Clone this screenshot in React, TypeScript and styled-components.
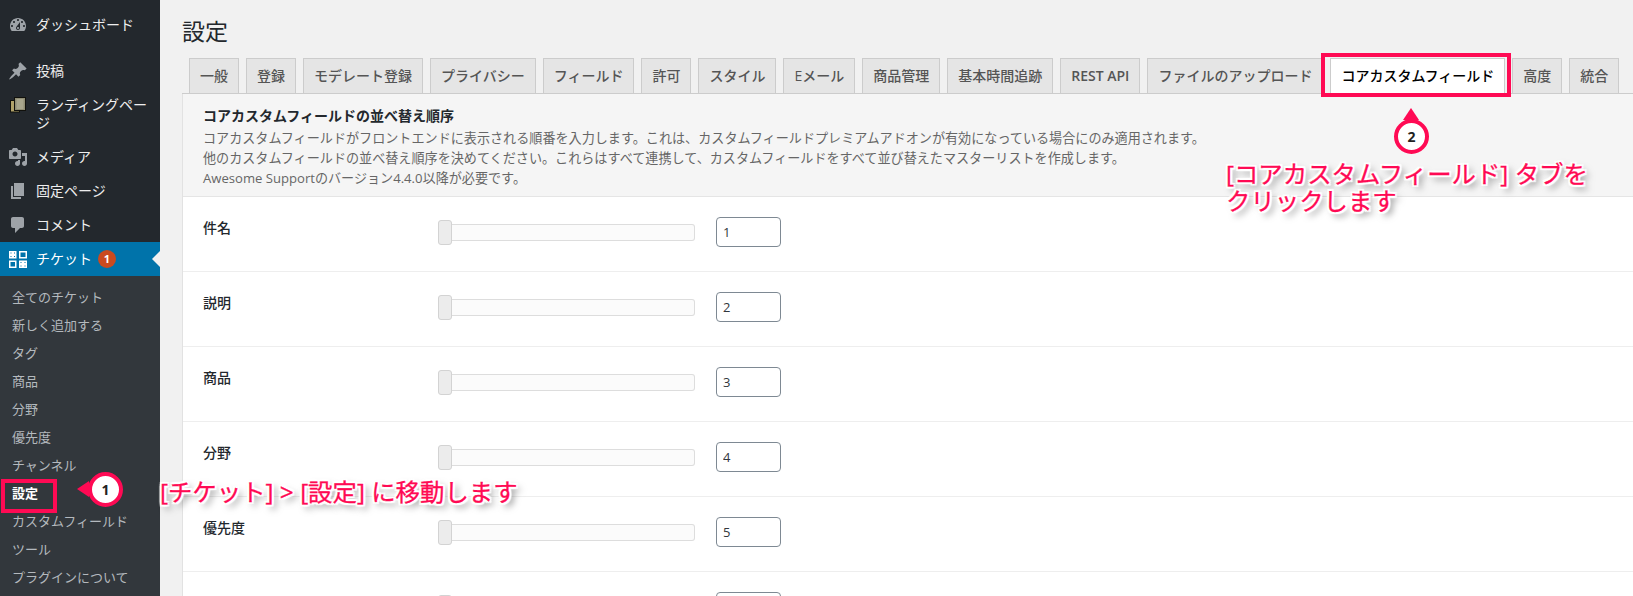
import styled, { createGlobalStyle } from 'styled-components';

const PINK = '#ff0a54';
const FONT = '"Open Sans", "Noto Sans CJK JP", sans-serif';

const Global = createGlobalStyle`
  html, body { margin: 0; padding: 0; height: 596px; overflow: hidden; background: #f1f1f1; }
  body { font-family: ${FONT}; font-size: 13px; color: #444; }
  * { box-sizing: border-box; }
`;

const Page = styled.div`
  position: relative;
  display: flex;
  width: 1633px;
  height: 596px;
  overflow: hidden;
`;

/* admin menu */
const Sidebar = styled.nav`
  flex: 0 0 160px;
  background: #23282d;
  padding-top: 8px;
`;

const MenuItem = styled.div<{ $current?: boolean; $gap?: boolean }>`
  position: relative;
  display: flex;
  align-items: flex-start;
  padding: 8px 8px 8px 8px;
  margin-bottom: ${(p) => (p.$gap ? '12px' : '0')};
  font-size: 14px;
  line-height: 18px;
  color: ${(p) => (p.$current ? '#fff' : '#eee')};
  background: ${(p) => (p.$current ? '#0073aa' : 'transparent')};

  ${(p) =>
    p.$current &&
    `&::after {
      content: '';
      position: absolute;
      right: 0;
      top: 9px;
      border: 8px solid transparent;
      border-right-color: #f1f1f1;
      border-left-width: 0;
    }`}
`;

const MenuIcon = styled.span`
  flex: 0 0 20px;
  width: 20px;
  height: 18px;
  margin-right: 8px;
  display: flex;
  align-items: center;
  justify-content: center;
  color: #9ea3a8;

  svg { display: block; flex: none; }
`;

const Badge = styled.span`
  display: inline-flex;
  align-items: center;
  justify-content: center;
  width: 18px;
  height: 18px;
  margin-left: 6px;
  border-radius: 50%;
  background: #ca4a1f;
  color: #fff;
  font-size: 11px;
  font-weight: 700;
  vertical-align: top;
`;

const SubMenu = styled.div`
  background: #32373c;
  padding: 7px 0 8px;
  height: 320px;
`;

const SubItem = styled.div<{ $current?: boolean }>`
  padding: 5px 12px;
  font-size: 13px;
  line-height: 18px;
  color: ${(p) => (p.$current ? '#fff' : '#b4b9be')};
  font-weight: ${(p) => (p.$current ? 700 : 400)};
`;

/* settings page */
const Main = styled.main`
  flex: 1;
  min-width: 0;
  padding: 10px 0 0 22px;
`;

const Title = styled.h1`
  margin: 0;
  padding: 7px 0 4px;
  font-size: 23px;
  font-weight: 400;
  line-height: 29px;
  color: #23282d;
`;

const Tabs = styled.div`
  display: flex;
  gap: 7px;
  margin-top: 8px;
  padding-left: 7px;
  border-bottom: 1px solid #ccc;
`;

const Tab = styled.div<{ $active?: boolean; $latin?: boolean }>`
  flex: none;
  padding: 5px 10px;
  margin-bottom: -1px;
  border: 1px solid #ccc;
  font-size: 14px;
  font-weight: ${(p) => (p.$latin ? 600 : 500)};
  line-height: 24px;
  white-space: nowrap;
  color: ${(p) => (p.$active ? '#000' : '#555')};
  background: ${(p) => (p.$active ? '#fff' : '#e5e5e5')};
  border-bottom-color: ${(p) => (p.$active ? '#fff' : '#ccc')};
`;

const Panel = styled.section`
  border-left: 1px solid #e2e2e2;
  background: #fff;
`;

const Intro = styled.header`
  height: 103px;
  padding: 12px 20px 0 20px;
  background: #f5f5f5;
  border-bottom: 1px solid #e5e5e5;
`;

const IntroTitle = styled.h3`
  margin: 0 0 2px;
  font-size: 14px;
  font-weight: 700;
  line-height: 20px;
  color: #23282d;
`;

const IntroText = styled.p`
  margin: 0;
  font-size: 13.1px;
  line-height: 20px;
  color: #666;
`;

const Row = styled.div`
  display: flex;
  align-items: flex-start;
  height: 75px;
  padding: 20px 0 0 20px;
  border-bottom: 1px solid #eee;
`;

const RowLabel = styled.div`
  flex: 0 0 235px;
  margin-top: 1px;
  font-size: 14px;
  font-weight: 500;
  line-height: 20px;
  color: #23282d;
`;

const Slider = styled.div`
  flex: 0 0 257px;
  height: 30px;
  display: flex;
  align-items: center;
`;

const Handle = styled.span`
  flex: 0 0 14px;
  height: 25px;
  margin-top: 1px;
  background: #ececec;
  border: 1px solid #d3d3d3;
  border-radius: 3px;
`;

const Track = styled.span`
  flex: 1;
  height: 17px;
  background: #fbfbfb;
  border: 1px solid #ddd;
  border-left: 0;
  border-radius: 0 3px 3px 0;
`;

const OrderInput = styled.input`
  width: 65px;
  height: 30px;
  margin-left: 21px;
  padding: 0 6px;
  border: 1px solid #7e8993;
  border-radius: 4px;
  background: #fff;
  font-family: ${FONT};
  font-size: 13px;
  color: #32373c;
`;

/* annotations drawn over the screenshot */
const Frame = styled.div<{ $x: number; $y: number; $w: number; $h: number }>`
  position: absolute;
  left: ${(p) => p.$x}px;
  top: ${(p) => p.$y}px;
  width: ${(p) => p.$w}px;
  height: ${(p) => p.$h}px;
  border: 4px solid ${PINK};
`;

const Pin = styled.div<{ $x: number; $y: number; $dir: 'left' | 'up' }>`
  position: absolute;
  left: ${(p) => p.$x}px;
  top: ${(p) => p.$y}px;
  width: 35px;
  height: 35px;
  display: flex;
  align-items: center;
  justify-content: center;
  border: 4px solid ${PINK};
  border-radius: 50%;
  background: #fff;
  color: #222;
  font-size: 14px;
  font-weight: 700;

  &::before {
    content: '';
    position: absolute;
    ${(p) =>
      p.$dir === 'left'
        ? `left: -15px; top: 5px; border-style: solid; border-width: 8px 12px 8px 0; border-color: transparent ${PINK} transparent transparent;`
        : `top: -15px; left: 5px; border-style: solid; border-width: 0 8px 12px 8px; border-color: transparent transparent ${PINK} transparent;`}
  }
`;

const Note = styled.div<{ $x: number; $y: number }>`
  position: absolute;
  left: ${(p) => p.$x}px;
  top: ${(p) => p.$y}px;
  font-size: 24.4px;
  line-height: 27px;
  white-space: nowrap;
  color: ${PINK};
  -webkit-text-stroke: 0.3px ${PINK};
  text-shadow:
    2px 0 1px #fff, -2px 0 1px #fff, 0 2px 1px #fff, 0 -2px 1px #fff,
    2px 2px 1px #fff, -2px 2px 1px #fff, 2px -2px 1px #fff, -2px -2px 1px #fff,
    4px 4px 7px rgba(0, 0, 0, 0.6);
`;

const Dashboard = () => (
  <svg width="20" height="20" viewBox="0 0 20 20" fill="currentColor">
    <path
      fillRule="evenodd"
      d="M3.76 16h12.48c1.1-1.37 1.76-3.11 1.76-5 0-4.42-3.58-8-8-8s-8 3.58-8 8c0 1.89.66 3.63 1.76 5zM10 4c.55 0 1 .45 1 1s-.45 1-1 1-1-.45-1-1 .45-1 1-1zM6 6c.55 0 1 .45 1 1s-.45 1-1 1-1-.45-1-1 .45-1 1-1zm8 0c.55 0 1 .45 1 1s-.45 1-1 1-1-.45-1-1 .45-1 1-1zm-5.37 5.55L12 7v6c0 1.1-.9 2-2 2s-2-.9-2-2c0-.57.24-1.08.63-1.45zM4 10c.55 0 1 .45 1 1s-.45 1-1 1-1-.45-1-1 .45-1 1-1zm12 0c.55 0 1 .45 1 1s-.45 1-1 1-1-.45-1-1 .45-1 1-1zm-5 3c0-.55-.45-1-1-1s-1 .45-1 1 .45 1 1 1 1-.45 1-1z"
    />
  </svg>
);

const Thumbtack = () => (
  <svg width="20" height="20" viewBox="0 0 20 20" fill="currentColor">
    <path d="M10.44 3.02l1.82-1.82 6.36 6.35-1.83 1.82c-1.05-.68-2.48-.57-3.41.36l-.75.75c-.92.93-1.04 2.35-.35 3.41l-1.83 1.82-2.41-2.41-2.8 2.79c-.42.42-3.38 2.71-3.8 2.29s1.86-3.39 2.28-3.81l2.79-2.79L4.1 9.36l1.83-1.82c1.05.69 2.48.57 3.4-.36l.75-.75c.93-.92 1.05-2.35.36-3.41z" />
  </svg>
);

const Landing = () => (
  <svg width="16" height="16" viewBox="0 0 16 16">
    <rect x="0.5" y="3.5" width="9" height="11.5" fill="#b0a26a" stroke="#11110c" />
    <rect x="4.5" y="0.5" width="11" height="13" fill="#8f8d74" stroke="#11110c" />
    <path d="M6.5 3h7M6.5 5h7M6.5 7h7M6.5 9h7M6.5 11h7" stroke="#c1bfa6" strokeWidth="1" />
  </svg>
);

const Media = () => (
  <svg width="20" height="20" viewBox="0 0 20 20" fill="currentColor">
    <path
      fillRule="evenodd"
      d="M13 11V4c0-.55-.45-1-1-1h-1.67L9 1H5L3.67 3H2c-.55 0-1 .45-1 1v7c0 .55.45 1 1 1h10c.55 0 1-.45 1-1zM7 4.5c1.38 0 2.5 1.12 2.5 2.5S8.38 9.5 7 9.5 4.5 8.38 4.5 7 5.62 4.5 7 4.5zM14 6h5v10.5c0 1.38-1.12 2.5-2.5 2.5S14 17.88 14 16.5s1.12-2.5 2.5-2.5c.17 0 .34.02.5.05V9h-3V6zm-4 8.05V13h2v3.5c0 1.38-1.12 2.5-2.5 2.5S7 17.88 7 16.5 8.12 14 9.5 14c.17 0 .34.02.5.05z"
    />
  </svg>
);

const Pages = () => (
  <svg width="20" height="20" viewBox="0 0 20 20" fill="currentColor">
    <path d="M6 15V2h10v13H6zm-1 1h8v2H3V5h2v11z" />
  </svg>
);

const Comment = () => (
  <svg width="20" height="20" viewBox="0 0 20 20" fill="currentColor">
    <path d="M5 2h9c1.1 0 2 .9 2 2v7c0 1.1-.9 2-2 2h-2l-5 5v-5H5c-1.1 0-2-.9-2-2V4c0-1.1.9-2 2-2z" />
  </svg>
);

const Ticket = () => (
  <svg width="18" height="17" viewBox="0 0 18 17" fill="none">
    <rect x="0" y="0" width="7.5" height="7.5" fill="#fff" />
    <rect x="10.75" y="0.75" width="6.5" height="6" stroke="#fff" strokeWidth="1.5" />
    <rect x="0.75" y="10.25" width="6" height="6" stroke="#fff" strokeWidth="1.5" />
    <rect x="10" y="9.5" width="8" height="7.5" fill="#fff" />
    <g fill="#0073aa">
      <rect x="1.5" y="1.5" width="1" height="1" />
      <rect x="5" y="1.5" width="1" height="1" />
      <rect x="1.5" y="5" width="1" height="1" />
      <rect x="5" y="5" width="1" height="1" />
      <rect x="11.5" y="11" width="1" height="1" />
      <rect x="15.5" y="11" width="1" height="1" />
      <rect x="11.5" y="14.5" width="1" height="1" />
      <rect x="15.5" y="14.5" width="1" height="1" />
    </g>
  </svg>
);

const tabs = [
  '一般', '登録', 'モデレート登録', 'プライバシー', 'フィールド', '許可', 'スタイル', 'Eメール',
  '商品管理', '基本時間追跡', 'REST API', 'ファイルのアップロード', 'コアカスタムフィールド', '高度', '統合',
];

const subItems = [
  '全てのチケット', '新しく追加する', 'タグ', '商品', '分野', '優先度', 'チャンネル', '設定',
  'カスタムフィールド', 'ツール', 'プラグインについて',
];

// the sixth row is cut by the bottom of the page before its label shows
const fields = ['件名', '説明', '商品', '分野', '優先度', ''];

export default function App() {
  return (
    <Page>
      <Global />
      <Sidebar>
        <MenuItem $gap><MenuIcon><Dashboard /></MenuIcon>ダッシュボード</MenuItem>
        <MenuItem><MenuIcon><Thumbtack /></MenuIcon>投稿</MenuItem>
        <MenuItem><MenuIcon><Landing /></MenuIcon><span>ランディングページ</span></MenuItem>
        <MenuItem><MenuIcon><Media /></MenuIcon>メディア</MenuItem>
        <MenuItem><MenuIcon><Pages /></MenuIcon>固定ページ</MenuItem>
        <MenuItem><MenuIcon><Comment /></MenuIcon>コメント</MenuItem>
        <MenuItem $current>
          <MenuIcon><Ticket /></MenuIcon>
          チケット<Badge>1</Badge>
        </MenuItem>
        <SubMenu>
          {subItems.map((s) => (
            <SubItem key={s} $current={s === '設定'}>{s}</SubItem>
          ))}
        </SubMenu>
      </Sidebar>

      <Main>
        <Title>設定</Title>
        <Tabs>
          {tabs.map((t) => (
            <Tab key={t} $active={t === 'コアカスタムフィールド'} $latin={t === 'REST API'}>{t}</Tab>
          ))}
        </Tabs>
        <Panel>
          <Intro>
            <IntroTitle>コアカスタムフィールドの並べ替え順序</IntroTitle>
            <IntroText>
              コアカスタムフィールドがフロントエンドに表示される順番を入力します。これは、カスタムフィールドプレミアムアドオンが有効になっている場合にのみ適用されます。
              <br />
              他のカスタムフィールドの並べ替え順序を決めてください。これらはすべて連携して、カスタムフィールドをすべて並び替えたマスターリストを作成します。
              <br />
              Awesome Supportのバージョン4.4.0以降が必要です。
            </IntroText>
          </Intro>
          {fields.map((f, i) => (
            <Row key={i}>
              <RowLabel>{f}</RowLabel>
              <Slider>
                <Handle />
                <Track />
              </Slider>
              <OrderInput readOnly value={i + 1} />
            </Row>
          ))}
        </Panel>
      </Main>

      <Frame $x={1} $y={479} $w={56} $h={34} />
      <Pin $x={88} $y={472} $dir="left">1</Pin>
      <Note $x={160} $y={478}>[チケット] &gt; [設定] に移動します</Note>

      <Frame $x={1321} $y={53} $w={190} $h={44} />
      <Pin $x={1394} $y={119} $dir="up">2</Pin>
      <Note $x={1226} $y={160}>
        [コアカスタムフィールド] タブを
        <br />
        クリックします
      </Note>
    </Page>
  );
}
